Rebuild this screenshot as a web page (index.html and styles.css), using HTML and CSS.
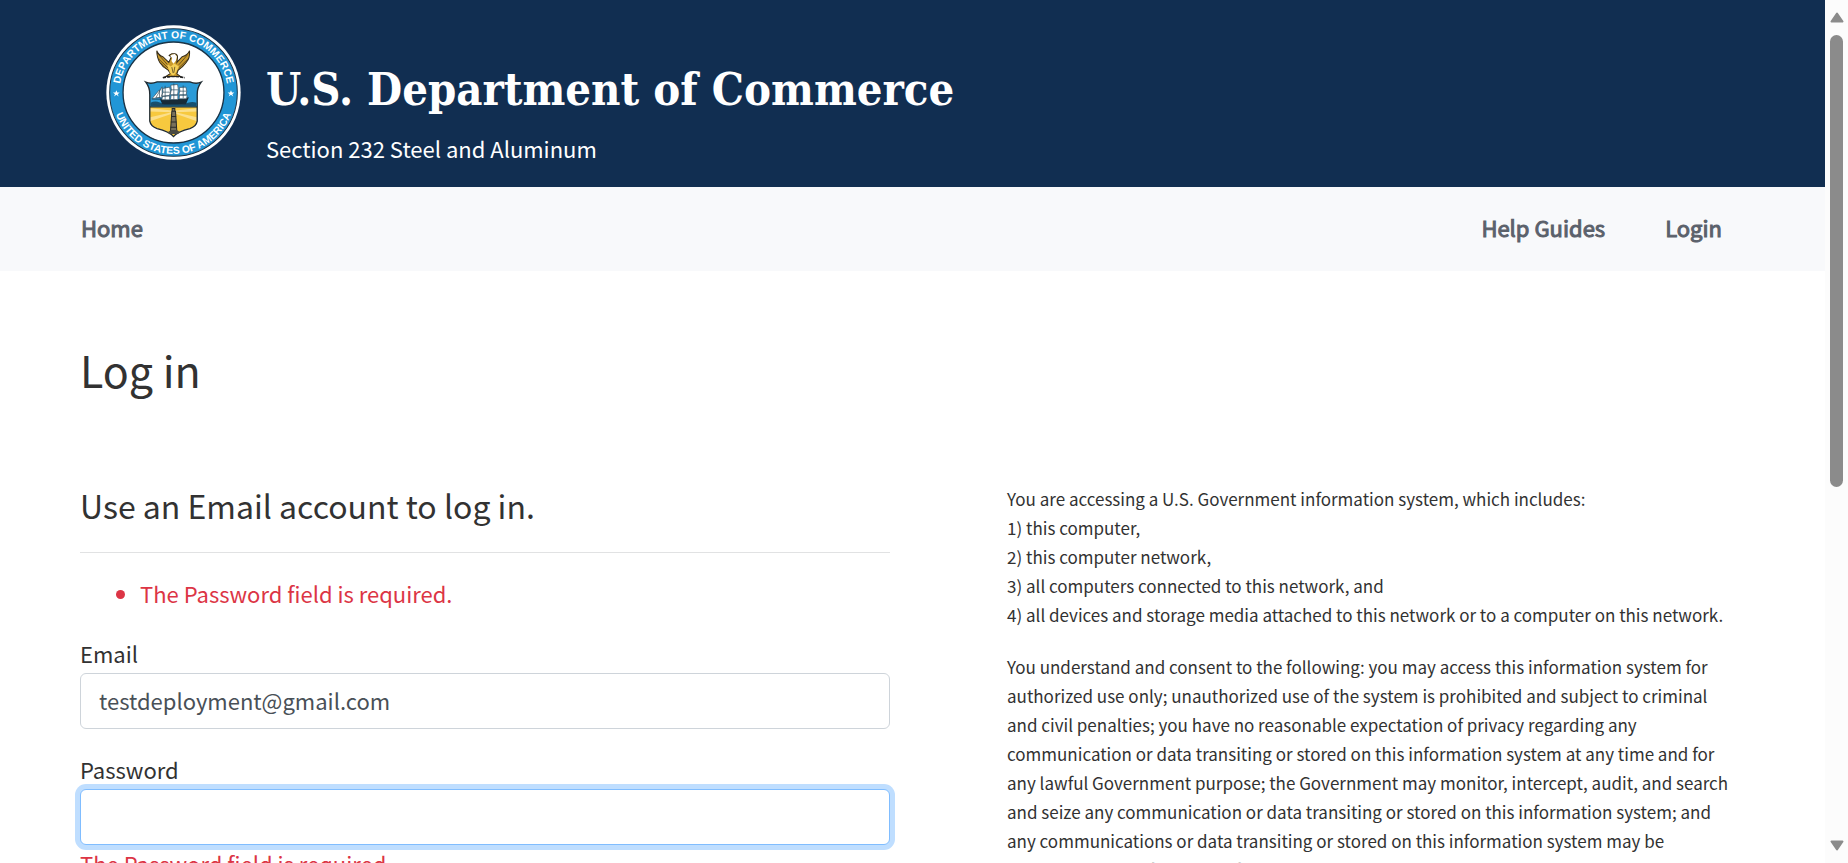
FILE: index.html
```html
<!DOCTYPE html>
<html lang="en">
<head>
<meta charset="utf-8">
<title>Log in - Section 232 Steel and Aluminum</title>
<link rel="stylesheet" href="styles.css">
</head>
<body>
<div class="window">
  <div class="page">
    <header class="banner">
      <svg class="seal" viewBox="32 30 404 404" role="img" aria-label="Department of Commerce seal">
        <defs>
          <path id="arc-top" d="M72 232a162 162 0 0 1 324 0"/>
          <path id="arc-bottom" d="M50 232a184 184 0 0 0 368 0"/>
        </defs>
        <circle cx="234" cy="232" r="201" fill="#fff"/>
        <circle cx="234" cy="232" r="191" fill="#2196d6" stroke="#1b3346" stroke-width="3"/>
        <circle cx="234" cy="232" r="151" fill="#fff" stroke="#1b3346" stroke-width="4"/>
        <text class="seal-text"><textPath href="#arc-top" startOffset="50%" text-anchor="middle">DEPARTMENT OF COMMERCE</textPath></text>
        <text class="seal-text"><textPath href="#arc-bottom" startOffset="50%" text-anchor="middle">UNITED STATES OF AMERICA</textPath></text>
        <path fill="#fff" d="M63 225l3 7h7l-6 5 3 7-7-5-7 5 3-7-6-5h7zM406 225l3 7h7l-6 5 3 7-7-5-7 5 3-7-6-5h7z"/>
        <!-- eagle -->
        <path fill="#c99a2b" stroke="#332a18" stroke-width="3" d="M184 107q4 12 18 18l18 17 7-16-6-5 8-5h9q9 2 8 12l-2 14 16-17q17-5 22-18 2 22-10 35-11 15-24 23l-4 11 11 8h-44l14-9-7-10q-16-8-25-23-9-15-9-35z"/>
        <path fill="#f5cf55" d="M214 146l12 8 10-9 14 9-8 17-9 12-10-10z"/>
        <path fill="#fff" d="M228 119l10-2 6 7-3 13-7 9-6-8 2-9-6-6z"/>
        <path fill="none" stroke="#3c301a" stroke-width="2" d="M190 119l26 30M189 131l28 27M196 145l24 22M276 119l-26 30M278 131l-28 27M270 145l-24 22M229 156l4 18M238 155l-3 18"/>
        <path fill="none" stroke="#222" stroke-width="5" stroke-dasharray="10 3" d="M202 188q30-8 66 0"/>
        <!-- shield -->
        <path fill="#f7c93e" d="M163 274h142v44q-3 16-22 22-35 8-49 24-14-16-49-24-19-6-22-22z"/>
        <path fill="#2b9bd8" d="M151 201q16 7 34-1h98q18 8 34 1-13 17-12 38v35H163v-35q1-21-12-38z"/>
        <path fill="#fbdf8a" d="M230 286l-66-7v10l65 2-65 15v12l67-23zM239 286l65-7v10l-64 2 64 15v12l-66-23z"/>
        <path fill="none" stroke="#202b32" stroke-width="4" d="M151 201q16 7 34-1h98q18 8 34 1-13 17-12 38v79q-3 16-22 22-35 8-49 24-14-16-49-24-19-6-22-22v-79q1-21-12-38zM163 275h142"/>
        <path fill="#17506f" d="M165 263q14-7 28-1 14 6 28 0 14-5 28 1 14 5 28 0 14-5 26 0v11H165z"/>
        <path fill="#172b38" d="M192 249q42 9 88-3l-9 22h-70z"/>
        <path fill="#fff" stroke="#344b59" stroke-width="2" d="M170 250l22-26v24zM181 248l19-33v31zM202 220l20-4q6 14 0 25l-24 2q7-12 4-23zM226 210l20-2q5 14 0 31h-22q6-15 2-29zM252 217l19-1q5 12 1 23h-22q5-12 2-22zM201 244l21-2v12h-23zM227 240h20v13h-22zM252 240h23l-2 11h-22z"/>
        <path stroke="#24465a" stroke-width="2" fill="none" d="M209 212v42M235 205v48M263 211v38M169 252l27 1M202 231h21M226 224h22M252 228h21M172 267l16 3 18-2M249 269l18-2 20 3"/>
        <path fill="#78705b" stroke="#282a29" stroke-width="3" d="M229 288h11l4 60h-19zM230 280h8v8h-8z"/>
        <path fill="none" stroke="#282a29" stroke-width="3" d="M227 304h15M226 320h17M225 336h19"/>
        <path fill="#494a42" d="M215 352l12-8h17l11 8-10 4h-20z"/>
      </svg>
      <div class="banner-text">
        <p class="banner-title">U.S. Department of Commerce</p>
        <p class="banner-subtitle">Section 232 Steel and Aluminum</p>
      </div>
    </header>

    <nav class="navbar">
      <a class="nav-link" href="#home">Home</a>
      <div class="nav-group">
        <a class="nav-link" href="#guides">Help Guides</a>
        <a class="nav-link" href="#login">Login</a>
      </div>
    </nav>

    <main class="content">
      <h1 class="page-title">Log in</h1>
      <div class="columns">
        <form class="login-form">
          <h2 class="form-title">Use an Email account to log in.</h2>
          <hr class="divider">
          <ul class="error-list">
            <li>The Password field is required.</li>
          </ul>
          <div class="field">
            <label for="email">Email</label>
            <input class="text-input" id="email" type="email" value="testdeployment@gmail.com">
          </div>
          <div class="field">
            <label for="password">Password</label>
            <input class="text-input is-active" id="password" type="password" aria-describedby="password-error">
            <span class="field-error" id="password-error">The Password field is required.</span>
          </div>
        </form>
        <section class="notice">
          <p>You are accessing a U.S. Government information system, which includes:<br>
          1) this computer,<br>
          2) this computer network,<br>
          3) all computers connected to this network, and<br>
          4) all devices and storage media attached to this network or to a computer on this network.</p>
          <p>You understand and consent to the following: you may access this information system for authorized use only; unauthorized use of the system is prohibited and subject to criminal and civil penalties; you have no reasonable expectation of privacy regarding any communication or data transiting or stored on this information system at any time and for any lawful Government purpose; the Government may monitor, intercept, audit, and search and seize any communication or data transiting or stored on this information system; and any communications or data transiting or stored on this information system may be disclosed or used for any lawful Government purpose.</p>
        </section>
      </div>
    </main>
  </div>

  <div class="scrollbar" aria-hidden="true">
    <svg class="scroll-arrow" viewBox="0 0 14 11"><path d="M7 1.500L12.500 9.500H1.500z"/></svg>
    <div class="scroll-track"><div class="scroll-thumb"></div></div>
    <svg class="scroll-arrow" viewBox="0 0 14 11"><path d="M7 9.500L12.500 1.500H1.500z"/></svg>
  </div>
</div>
</body>
</html>
```
FILE: styles.css
```css
* {
  box-sizing: border-box;
}

body {
  margin: 0;
  background: #fff;
  color: #323232;
  font-family: "Noto Sans CJK SC", "Noto Sans", sans-serif;
  font-size: 22px;
  line-height: 36px;
}

p,
h1,
h2,
ul {
  margin: 0;
}

.window {
  display: grid;
  grid-template-columns: minmax(0, 1fr) 23px;
  height: 100vh;
  overflow: hidden;
}

.page {
  overflow: hidden;
}

.banner {
  display: flex;
  align-items: flex-start;
  gap: 25px;
  padding: 25px 106px 21px;
  background: #112e51;
  color: #fff;
}

.seal {
  flex: none;
  width: 135px;
  height: 135px;
}

.seal-text {
  fill: #fff;
  font-family: "Liberation Sans", Arial, sans-serif;
  font-size: 31px;
  font-weight: 700;
}

.banner-text {
  padding-top: 35px;
}

.banner-title {
  margin-bottom: 10px;
  font-family: "DejaVu Serif Condensed", "DejaVu Serif", serif;
  font-size: 45px;
  font-weight: 700;
  line-height: 60px;
}

.navbar {
  display: flex;
  justify-content: space-between;
  padding: 22px 103px 26px 81px;
  background: #f8f9fb;
}

.nav-group {
  display: flex;
  gap: 60px;
}

.nav-link {
  color: #5b616b;
  text-decoration: none;
  -webkit-text-stroke: 1px #5b616b;
}

.content {
  padding: 66px 80px;
}

.page-title {
  font-size: 43px;
  font-weight: 400;
  line-height: 64px;
}

.columns {
  display: grid;
  grid-template-columns: 45fr 41fr;
  gap: 117px;
  margin-top: 80px;
}

.form-title {
  font-size: 32px;
  font-weight: 400;
  line-height: 48px;
}

.divider {
  margin: 23px 0 22px;
  border: 0;
  border-top: 1px solid #e1e2e3;
}

.error-list {
  margin-bottom: 24px;
  padding-left: 60px;
  color: #dc3545;
}

.field {
  display: flex;
  flex-direction: column;
  margin-bottom: 22px;
}

.field label {
  margin-bottom: 2px;
}

.text-input {
  width: 100%;
  height: 56px;
  padding: 8px 18px 10px;
  border: 1px solid #ced4da;
  border-radius: 6px;
  background: #fff;
  color: #495057;
  font: inherit;
}

.text-input.is-active,
.text-input:focus {
  border-color: #80bdff;
  outline: 0;
  box-shadow: 0 0 0 5px #bfdeff;
}

.field-error {
  color: #dc3545;
}

.notice {
  padding: 3px 10px 0 0;
  font-size: 17px;
  line-height: 29px;
}

.notice p {
  margin-bottom: 23px;
}

.scrollbar {
  display: flex;
  flex-direction: column;
  align-items: center;
  padding: 12px 0;
  background: #fcfcfc;
}

.scroll-arrow {
  width: 14px;
  height: 11px;
  fill: #8b8b8b;
  stroke: #8b8b8b;
  stroke-linejoin: round;
  stroke-width: 2px;
}

.scroll-track {
  flex: 1;
  padding: 12px 0;
}

.scroll-thumb {
  width: 13px;
  height: 57%;
  border-radius: 7px;
  background: #8b8b8b;
}
```
